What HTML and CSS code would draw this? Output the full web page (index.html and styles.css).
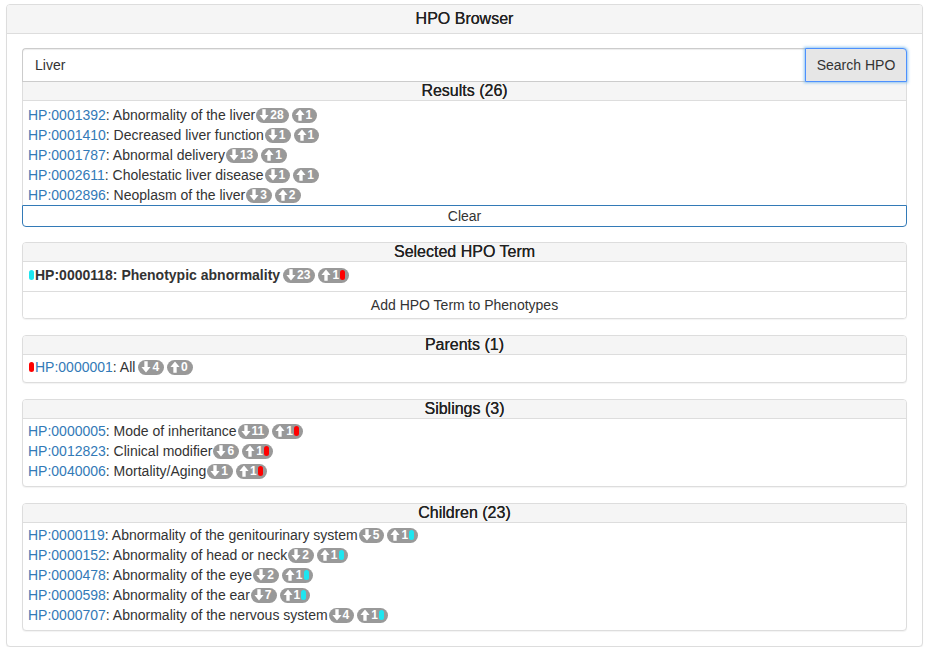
FILE: index.html
```html
<!DOCTYPE html>
<html>
<head>
<meta charset="utf-8">
<title>HPO Browser</title>
<link rel="stylesheet" href="styles.css">
</head>
<body>
<svg width="0" height="0" class="defs">
  <defs>
    <symbol id="dn" viewBox="0 0 12 14"><path d="M4 0h4v7h3.5L6 13.5 0.5 7H4z" fill="#fff"/></symbol>
    <symbol id="up" viewBox="0 0 12 14"><path d="M4 14h4V7h3.5L6 0.5 0.5 7H4z" fill="#fff"/></symbol>
  </defs>
</svg>
<div class="panel outer">
  <div class="outer-heading">HPO Browser</div>
  <div class="outer-body">
    <div class="search">
      <div class="input-group">
        <input class="query" type="text" value="Liver">
        <button class="search-btn">Search HPO</button>
      </div>
      <div class="results">
        <div class="sub-heading">Results (26)</div>
        <div class="list results-list">
          <div class="row"><a>HP:0001392</a>: Abnormality of the liver<span class="badge"><svg class="ar"><use href="#dn"/></svg>28</span><span class="badge"><svg class="ar"><use href="#up"/></svg>1</span></div>
          <div class="row"><a>HP:0001410</a>: Decreased liver function<span class="badge"><svg class="ar"><use href="#dn"/></svg>1</span><span class="badge"><svg class="ar"><use href="#up"/></svg>1</span></div>
          <div class="row"><a>HP:0001787</a>: Abnormal delivery<span class="badge"><svg class="ar"><use href="#dn"/></svg>13</span><span class="badge"><svg class="ar"><use href="#up"/></svg>1</span></div>
          <div class="row"><a>HP:0002611</a>: Cholestatic liver disease<span class="badge"><svg class="ar"><use href="#dn"/></svg>1</span><span class="badge"><svg class="ar"><use href="#up"/></svg>1</span></div>
          <div class="row"><a>HP:0002896</a>: Neoplasm of the liver<span class="badge"><svg class="ar"><use href="#dn"/></svg>3</span><span class="badge"><svg class="ar"><use href="#up"/></svg>2</span></div>
        </div>
      </div>
      <button class="clear-btn">Clear</button>
    </div>

    <div class="panel section first">
      <div class="sub-heading">Selected HPO Term</div>
      <div class="list selected">
        <div class="row strong"><span class="dot lead cyan"></span>HP:0000118: Phenotypic abnormality<span class="badge"><svg class="ar"><use href="#dn"/></svg>23</span><span class="badge"><svg class="ar"><use href="#up"/></svg>1<span class="dot red"></span></span></div>
      </div>
      <button class="add-btn">Add HPO Term to Phenotypes</button>
    </div>

    <div class="panel section">
      <div class="sub-heading">Parents (1)</div>
      <div class="list">
        <div class="row"><span class="dot lead red"></span><a>HP:0000001</a>: All<span class="badge"><svg class="ar"><use href="#dn"/></svg>4</span><span class="badge"><svg class="ar"><use href="#up"/></svg>0</span></div>
      </div>
    </div>

    <div class="panel section">
      <div class="sub-heading">Siblings (3)</div>
      <div class="list">
        <div class="row"><a>HP:0000005</a>: Mode of inheritance<span class="badge"><svg class="ar"><use href="#dn"/></svg>11</span><span class="badge"><svg class="ar"><use href="#up"/></svg>1<span class="dot red"></span></span></div>
        <div class="row"><a>HP:0012823</a>: Clinical modifier<span class="badge"><svg class="ar"><use href="#dn"/></svg>6</span><span class="badge"><svg class="ar"><use href="#up"/></svg>1<span class="dot red"></span></span></div>
        <div class="row"><a>HP:0040006</a>: Mortality/Aging<span class="badge"><svg class="ar"><use href="#dn"/></svg>1</span><span class="badge"><svg class="ar"><use href="#up"/></svg>1<span class="dot red"></span></span></div>
      </div>
    </div>

    <div class="panel section">
      <div class="sub-heading">Children (23)</div>
      <div class="list">
        <div class="row"><a>HP:0000119</a>: Abnormality of the genitourinary system<span class="badge"><svg class="ar"><use href="#dn"/></svg>5</span><span class="badge"><svg class="ar"><use href="#up"/></svg>1<span class="dot cyan"></span></span></div>
        <div class="row"><a>HP:0000152</a>: Abnormality of head or neck<span class="badge"><svg class="ar"><use href="#dn"/></svg>2</span><span class="badge"><svg class="ar"><use href="#up"/></svg>1<span class="dot cyan"></span></span></div>
        <div class="row"><a>HP:0000478</a>: Abnormality of the eye<span class="badge"><svg class="ar"><use href="#dn"/></svg>2</span><span class="badge"><svg class="ar"><use href="#up"/></svg>1<span class="dot cyan"></span></span></div>
        <div class="row"><a>HP:0000598</a>: Abnormality of the ear<span class="badge"><svg class="ar"><use href="#dn"/></svg>7</span><span class="badge"><svg class="ar"><use href="#up"/></svg>1<span class="dot cyan"></span></span></div>
        <div class="row"><a>HP:0000707</a>: Abnormality of the nervous system<span class="badge"><svg class="ar"><use href="#dn"/></svg>4</span><span class="badge"><svg class="ar"><use href="#up"/></svg>1<span class="dot cyan"></span></span></div>
      </div>
    </div>
  </div>
</div>
</body>
</html>
```

FILE: styles.css
```css
* { box-sizing: border-box; }
html, body { margin: 0; background: #fff; }
body {
  padding: 4px 7px 0 6px;
  font-family: "Liberation Sans", Arial, sans-serif;
  font-size: 14px;
  color: #333;
}
.defs { position: absolute; width: 0; height: 0; overflow: hidden; }

.panel {
  border: 1px solid #ddd;
  border-radius: 4px;
  background: #fff;
  box-shadow: 0 1px 1px rgba(0,0,0,.05);
}
.outer-heading {
  background: #f5f5f5;
  border-bottom: 1px solid #ddd;
  border-radius: 3px 3px 0 0;
  text-align: center;
  font-size: 16px;
  line-height: 18px;
  padding: 5px 15px;
  color: #222;
  text-shadow: 0 0 0.3px #222;
}
.outer-body { padding: 14px 15px 15px; }

.input-group { display: flex; height: 34px; }
.query {
  flex: 1;
  min-width: 0;
  height: 34px;
  border: 1px solid #ccc;
  border-right: none;
  border-radius: 4px 0 0 0;
  padding: 6px 12px;
  font: 14px "Liberation Sans", Arial, sans-serif;
  color: #333;
  outline: none;
  box-shadow: inset 0 1px 1px rgba(0,0,0,.075);
}
.search-btn {
  width: 102px;
  height: 34px;
  background: #e6e6e6;
  border: 1px solid #4d90fe;
  border-radius: 0 4px 0 0;
  box-shadow: 0 0 3px 1px rgba(102,175,233,.7);
  font: 14px "Liberation Sans", Arial, sans-serif;
  color: #333;
  padding: 0;
}
.results {
  border-left: 1px solid #ddd;
  border-right: 1px solid #ddd;
}
.sub-heading {
  background: #f5f5f5;
  border-bottom: 1px solid #ddd;
  text-align: center;
  font-size: 16px;
  line-height: 18px;
  color: #222;
  text-shadow: 0 0 0.3px #222;
}
.section .sub-heading { border-radius: 3px 3px 0 0; }

.list { padding: 2px 5px 5px; }
.results-list { padding: 4px 5px 0; }
.selected { padding: 3px 5px 6px; }

.row {
  display: flex;
  align-items: center;
  line-height: 20px;
  height: 20px;
  white-space: nowrap;
}
.row a { color: #337ab7; text-decoration: none; }
.row.strong { font-weight: bold; }

.badge {
  display: inline-flex;
  align-items: center;
  height: 15px;
  border-radius: 8px;
  background: #999;
  color: #fff;
  font-size: 12px;
  font-weight: bold;
  line-height: 15px;
  padding: 0 5px 0 3px;
  margin-left: 3px;
}
.row .badge:first-of-type { margin-left: 1px; }
.ar { width: 10px; height: 12px; margin-right: 1px; }

.dot {
  display: inline-block;
  width: 5px;
  height: 10px;
  border-radius: 3px;
}
.badge .dot { height: 10px; margin-left: 1px; margin-right: -1px; }
.dot.lead { margin-right: 1px; margin-left: 1px; }
.red { background: #f00; }
.cyan { background: #1ee6f0; }

.clear-btn {
  display: block;
  width: 100%;
  height: 22px;
  background: #fff;
  border: 1px solid #337ab7;
  border-radius: 0 0 4px 4px;
  font: 14px "Liberation Sans", Arial, sans-serif;
  color: #333;
  line-height: 18px;
  padding: 0;
}
.section { margin-top: 16px; }
.section.first { margin-top: 15px; }
.add-btn {
  display: block;
  width: 100%;
  height: 27px;
  background: #fff;
  border: none;
  border-top: 1px solid #ddd;
  border-radius: 0 0 3px 3px;
  font: 14px "Liberation Sans", Arial, sans-serif;
  color: #333;
  padding: 0;
}
```
